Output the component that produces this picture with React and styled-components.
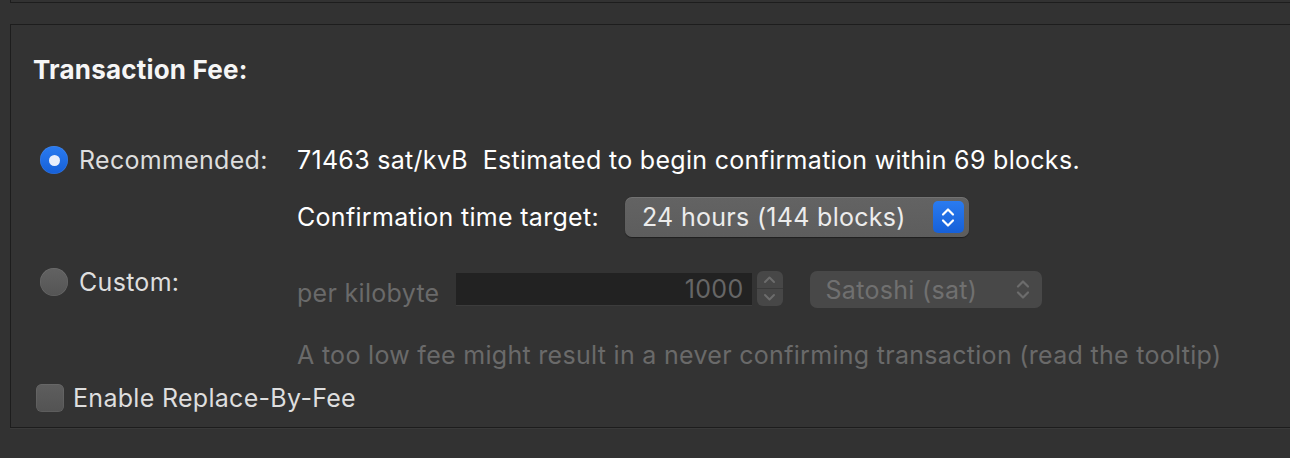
import React from "react";
import styled, { createGlobalStyle } from "styled-components";

const Global = createGlobalStyle`
  html, body { margin: 0; padding: 0; background: #323232; overflow: hidden; }
  body { font-family: Inter, "Noto Sans", "Liberation Sans", sans-serif; -webkit-font-smoothing: antialiased; }
`;

const Page = styled.div`
  width: 1290px;
  height: 458px;
  background: #323232;
  overflow: hidden;
  font-size: 25px;
  letter-spacing: 0.3px;
`;

const PrevBox = styled.div`
  margin-left: 10px;
  height: 2px;
  border-left: 1px solid #1d1d1d;
  border-bottom: 1px solid #1d1d1d;
`;

const Group = styled.section`
  margin: 21px -20px 0 10px;
  height: 404px;
  box-sizing: border-box;
  border: 1px solid #1d1d1d;
  border-right: none;
  box-shadow: 0 1px 0 #3a3a3a;
  background: #333333;
  padding: 30px 0 0 22px;
  display: flex;
  flex-direction: column;
`;

const Title = styled.h2`
  margin: 0;
  font-size: 26px;
  line-height: 30px;
  font-weight: 700;
  color: #f6f6f6;
  letter-spacing: 0.2px;
`;

const Grid = styled.div`
  margin: 61px 0 0 7px;
  display: grid;
  grid-template-columns: 257px 1fr;
  grid-auto-rows: auto;
`;

const Choice = styled.label`
  display: flex;
  align-items: center;
  gap: 11px;
  height: 28px;
  color: #dedede;
  margin-top: ${(p) => p.$top || 0}px;
`;

const RadioDot = styled.span`
  width: 28px;
  height: 28px;
  border-radius: 50%;
  box-sizing: border-box;
  flex: none;
  display: flex;
  align-items: center;
  justify-content: center;
  background: ${(p) =>
    p.$on
      ? "linear-gradient(#2a7bf0, #1660d8)"
      : "linear-gradient(#626262, #555555)"};
  box-shadow: inset 0 0 0 0.5px rgba(255,255,255,0.12);
  &::after {
    content: "";
    display: ${(p) => (p.$on ? "block" : "none")};
    width: 11px;
    height: 11px;
    border-radius: 50%;
    background: #e8eefb;
  }
`;

const Value = styled.div`
  display: flex;
  align-items: center;
  height: 28px;
  color: #ffffff;
  white-space: pre;
`;

const Cell = styled.div`
  display: flex;
  align-items: center;
  margin-top: ${(p) => p.$top || 0}px;
  grid-column: ${(p) => p.$col || "auto"};
`;

const Label = styled.span`
  color: ${(p) => (p.$dim ? "#6a6a6a" : "#ffffff")};
  white-space: nowrap;
  padding-top: ${(p) => p.$pt || 0}px;
`;

const Popup = styled.div`
  margin-left: ${(p) => p.$ml}px;
  width: ${(p) => p.$w}px;
  height: ${(p) => p.$h}px;
  box-sizing: border-box;
  border-radius: 7px;
  background: ${(p) => (p.$dim ? "#484848" : "linear-gradient(#636363, #5d5d5d)")};
  box-shadow: ${(p) => (p.$dim ? "none" : "inset 0 1px 0 rgba(255,255,255,0.1), 0 0.5px 1px rgba(0,0,0,0.4)")};
  display: flex;
  align-items: center;
  justify-content: space-between;
  padding: 0 ${(p) => (p.$dim ? 12 : 5)}px 0 ${(p) => (p.$dim ? 16 : 17)}px;
  color: ${(p) => (p.$dim ? "#707070" : "#ececec")};
`;

const BlueStepper = styled.span`
  width: 31px;
  height: 32px;
  border-radius: 5px;
  background: linear-gradient(#2a7bf0, #1660d8);
  display: flex;
  align-items: center;
  justify-content: center;
`;

const Field = styled.div`
  margin-left: 16px;
  width: 296px;
  height: 33px;
  box-sizing: border-box;
  background: #222222;
  border-bottom: 1px solid #3c3c3c;
  display: flex;
  align-items: center;
  justify-content: flex-end;
  padding-right: 8px;
  color: #666666;
`;

const Stepper = styled.div`
  margin-left: 5px;
  width: 26px;
  height: 35px;
  border-radius: 6px;
  background: #474747;
  display: flex;
  flex-direction: column;
  overflow: hidden;
  margin-top: -2px;
`;

const StepHalf = styled.span`
  flex: 1;
  display: flex;
  align-items: center;
  justify-content: center;
  border-top: ${(p) => (p.$lower ? "1px solid #3a3a3a" : "none")};
`;

const Hint = styled.div`
  grid-column: 2;
  margin-top: 32px;
  line-height: 30px;
  color: #6a6a6a;
  white-space: nowrap;
`;

const CheckRow = styled.label`
  margin: 14px 0 0 3px;
  display: flex;
  align-items: center;
  gap: 9px;
  height: 28px;
  color: #dedede;
`;

const CheckBox = styled.span`
  width: 28px;
  height: 28px;
  border-radius: 6px;
  box-sizing: border-box;
  background: linear-gradient(#5e5e5e, #535353);
  box-shadow: inset 0 0 0 0.5px rgba(255,255,255,0.12);
`;

const Chevrons = ({ color }) => (
  <svg width="14" height="23" viewBox="0 0 14 23" fill="none">
    <path d="M2 8.5 L7 3.5 L12 8.5" stroke={color} strokeWidth="2.2" strokeLinecap="round" strokeLinejoin="round" />
    <path d="M2 14.5 L7 19.5 L12 14.5" stroke={color} strokeWidth="2.2" strokeLinecap="round" strokeLinejoin="round" />
  </svg>
);

const Chev = ({ up }) => (
  <svg width="13" height="9" viewBox="0 0 13 9" fill="none">
    <path d={up ? "M2 7 L6.5 2.5 L11 7" : "M2 2 L6.5 6.5 L11 2"} stroke="#6c6c6c" strokeWidth="2" strokeLinecap="round" strokeLinejoin="round" />
  </svg>
);

export default function App() {
  return (
    <Page>
      <Global />
      <PrevBox />
      <Group>
        <Title>Transaction Fee:</Title>
        <Grid>
          <Choice>
            <RadioDot $on />
            Recommended:
          </Choice>
          <Value>{"71463 sat/kvB  Estimated to begin confirmation within 69 blocks."}</Value>

          <Cell $col="2" $top={23}>
            <Label>Confirmation time target:</Label>
            <Popup $ml={26} $w={344} $h={40}>
              24 hours (144 blocks)
              <BlueStepper>
                <Chevrons color="#ffffff" />
              </BlueStepper>
            </Popup>
          </Cell>

          <Choice $top={31}>
            <RadioDot />
            Custom:
          </Choice>
          <Cell $top={34}>
            <Label $dim $pt={6}>per kilobyte</Label>
            <Field>1000</Field>
            <Stepper>
              <StepHalf><Chev up /></StepHalf>
              <StepHalf $lower><Chev /></StepHalf>
            </Stepper>
            <Popup $dim $ml={27} $w={232} $h={37}>
              Satoshi (sat)
              <Chevrons color="#6c6c6c" />
            </Popup>
          </Cell>

          <Hint>A too low fee might result in a never confirming transaction (read the tooltip)</Hint>
        </Grid>
        <CheckRow>
          <CheckBox />
          Enable Replace-By-Fee
        </CheckRow>
      </Group>
    </Page>
  );
}
